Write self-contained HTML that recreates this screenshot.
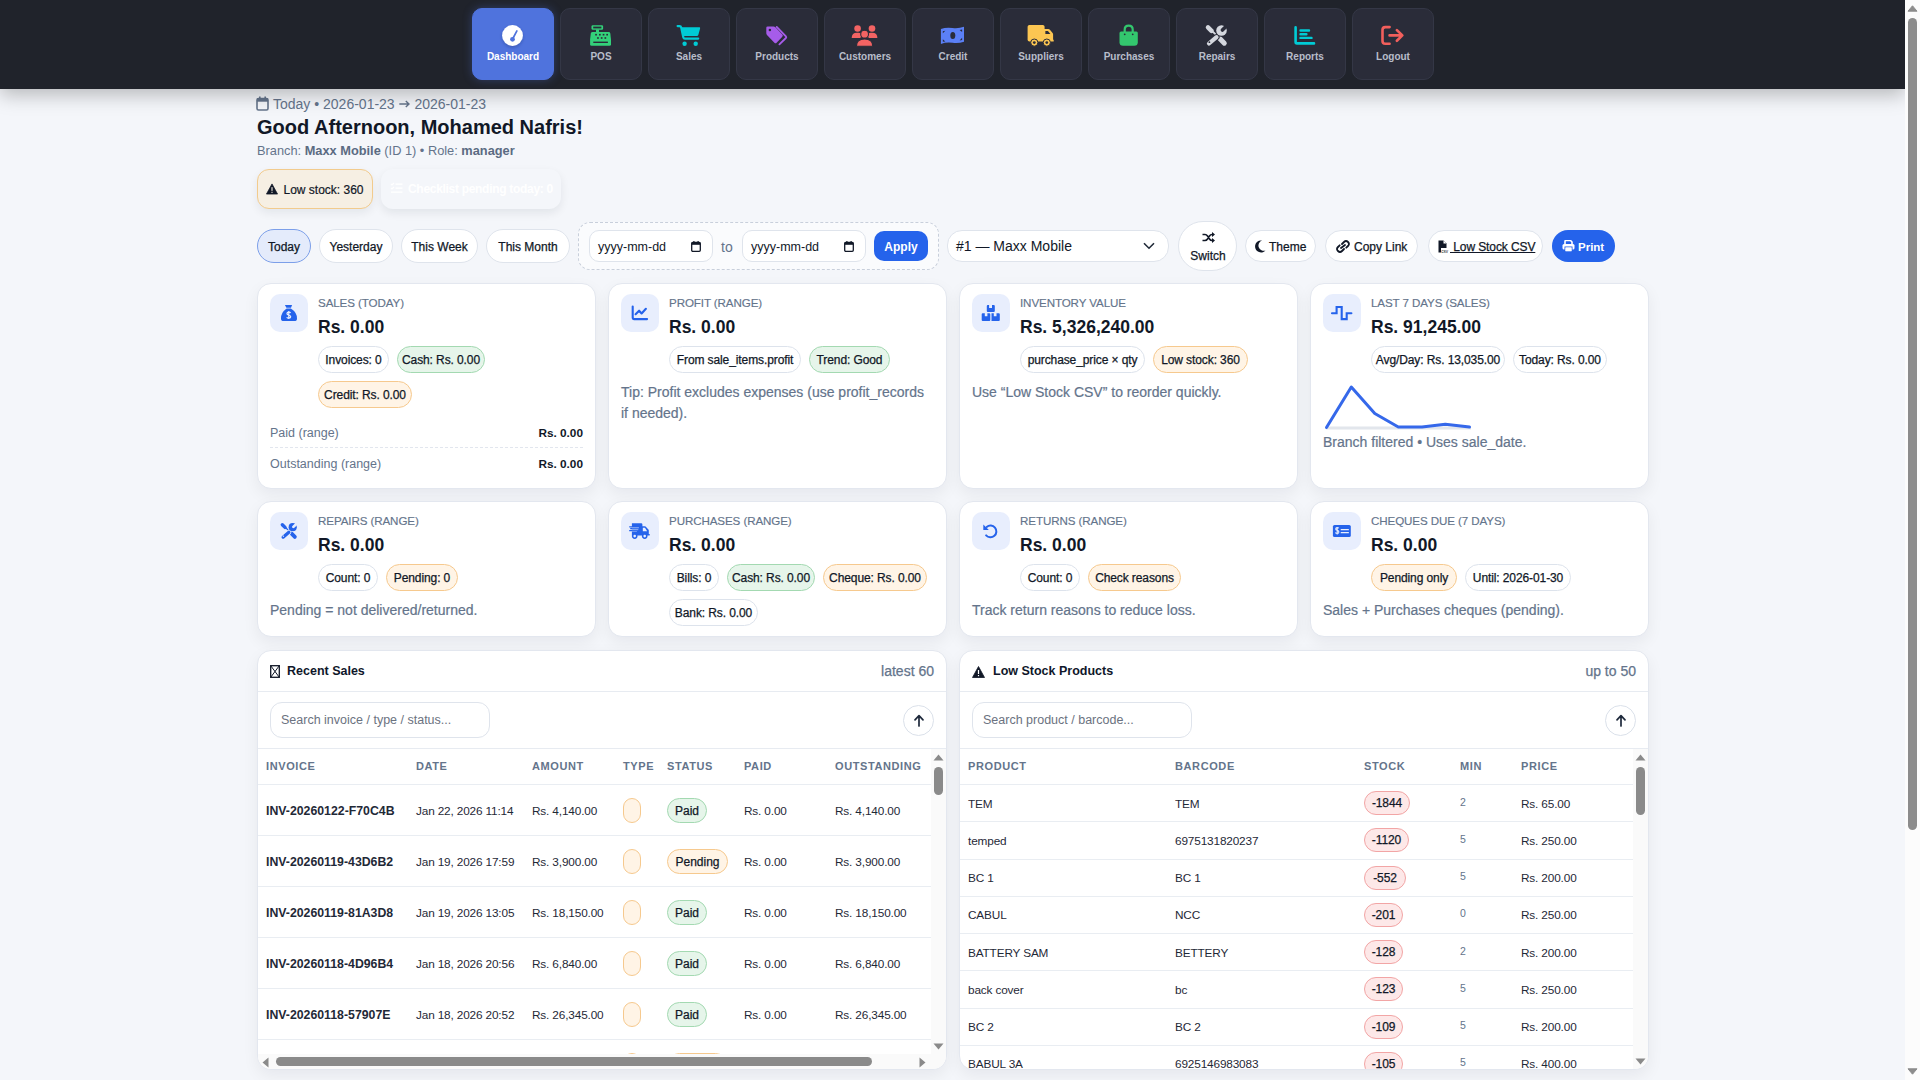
<!DOCTYPE html>
<html><head><meta charset="utf-8">
<style>
*{box-sizing:border-box;margin:0;padding:0}
html,body{width:1920px;height:1080px;overflow:hidden}
body{font-family:"Liberation Sans",sans-serif;background:#f4f6fa;color:#0f172a;position:relative}
.abs{position:absolute}
/* top bar */
.topbar{position:absolute;left:0;top:0;width:1905px;height:89px;background:#20232b;box-shadow:0 6px 18px rgba(0,0,0,.25);z-index:5}
.nav{position:absolute;top:8px;width:82px;height:72px;border-radius:10px;background:#2a2c39;border:1px solid #343746;text-align:center}
.nav svg{position:absolute;left:29px;top:16px;width:24px;height:20px}
.nav span{position:absolute;left:0;right:0;top:41px;font-size:10px;font-weight:700;color:#b8bdca;line-height:14px}
.nav.active{background:#4f73dd;border-color:#4f73dd;box-shadow:0 0 10px rgba(79,115,221,.35)}
.nav.active span{color:#fff}
/* header */
.dateline{left:256px;top:95px;font-size:14px;color:#64748b;line-height:18px;white-space:nowrap}
.dateline svg{position:absolute;left:0;top:1px}
.dateline span{position:absolute;left:17px;top:0}
.hello{left:257px;top:115px;font-size:20px;font-weight:700;color:#111827;line-height:24px;white-space:nowrap}
.branch{left:257px;top:143px;font-size:12.8px;color:#64748b;line-height:16px;white-space:nowrap}
.branch b{color:#5b6b82}
.badge1{left:257px;top:169px;width:116px;height:40px;border-radius:12px;background:#f6efe3;border:1px solid #f2cb8d;box-shadow:0 4px 10px rgba(15,23,42,.07);font-size:12px;color:#111827;white-space:nowrap}
.badge2{left:381px;top:169px;width:180px;height:40px;border-radius:12px;background:#f4f6fa;box-shadow:0 4px 10px rgba(15,23,42,.08);font-size:12px;color:#fff;font-weight:700;white-space:nowrap;letter-spacing:-.3px}
/* toolbar */
.pill{position:absolute;height:34px;border-radius:17px;background:#fff;border:1px solid #dfe4ec;font-size:12px;color:#111827;line-height:34px;text-align:center;white-space:nowrap;-webkit-text-stroke:.25px #111827}
.pill.sel{background:#e4ebfb;border-color:#7c9fe9}
.dashbox{left:578px;top:222px;width:361px;height:48px;border:1px dashed #c8cfdb;border-radius:12px;background:rgba(255,255,255,.55)}
.dinput{position:absolute;top:230px;width:124px;height:32px;border:1px solid #dfe4ec;border-radius:10px;background:#fff;font-size:12.5px;color:#111827;line-height:32px;padding-left:8px}
.dinput svg{position:absolute;right:11px;top:10px}
.btnblue{position:absolute;background:#2563eb;color:#fff;font-weight:700;text-align:center;white-space:nowrap}
.tb{position:absolute;top:230px;height:32px;border-radius:16px;background:#fff;border:1px solid #dfe4ec;font-size:13px;color:#111827;line-height:30px;white-space:nowrap}
.tb span{-webkit-text-stroke:.25px #111827}
/* cards */
.card{position:absolute;background:#fff;border:1px solid #e3e7ef;border-radius:14px;box-shadow:0 6px 16px rgba(15,23,42,.06)}
.ico{position:absolute;left:12px;top:10px;width:38px;height:38px;border-radius:10px;background:#e8eefd}
.ico svg{position:absolute;left:11px;top:11px;width:16px;height:16px;overflow:visible}
.lbl{position:absolute;left:60px;top:10.5px;font-size:11.6px;color:#64748b;line-height:15px;white-space:nowrap;letter-spacing:-.1px;-webkit-text-stroke:.15px #64748b}
.val{position:absolute;left:60px;top:32px;font-size:17.5px;font-weight:700;color:#111827;line-height:22px;white-space:nowrap}
.chips{position:absolute;left:60px;top:62px;right:12px;display:flex;flex-wrap:wrap;gap:8px 8px}
.chip{height:27px;border-radius:14px;border:1px solid #dde3ec;background:#fff;font-size:12px;line-height:26px;padding:0;text-align:center;color:#111827;white-space:nowrap;letter-spacing:-.1px;-webkit-text-stroke:.25px #111827}
.chip.g{background:#e6f5ea;border-color:#a3d9b1}
.chip.o{background:#fff4e6;border-color:#f6c98e}
.chip.r{background:#fde8e8;border-color:#f2a5a5}
.note{position:absolute;left:12px;font-size:14px;color:#64748b;line-height:21px;-webkit-text-stroke:.2px #64748b}
/* panels */
.panel{position:absolute;top:650px;width:690px;height:420px;background:#fff;border:1px solid #e3e7ef;border-radius:14px;box-shadow:0 6px 16px rgba(15,23,42,.06);overflow:hidden}
.ptitle{position:absolute;left:12px;top:12px;font-size:12.5px;font-weight:700;color:#0f172a;line-height:17px;white-space:nowrap}
.pright{position:absolute;right:12px;top:12px;font-size:14px;color:#64748b;line-height:17px;font-weight:400;-webkit-text-stroke:.25px #64748b}
.hr{position:absolute;left:0;right:0;height:1px;background:#e7ebf1}
.search{position:absolute;left:12px;top:51px;width:220px;height:36px;border:1px solid #dfe4ec;border-radius:12px;font-size:12.5px;color:#6b7280;line-height:34px;padding-left:10px}
.upbtn{position:absolute;top:54px;width:31px;height:31px;border-radius:50%;border:1px solid #dbe1ea;background:#fff}
.upbtn svg{position:absolute;left:8px;top:7px}
.th{position:absolute;top:111px;font-size:11px;font-weight:700;color:#64748b;letter-spacing:.6px;line-height:14px;white-space:nowrap}
.td{position:absolute;font-size:11.8px;color:#1f2937;line-height:16px;white-space:nowrap;letter-spacing:-.15px}
.rowline{position:absolute;height:1px;background:#e9edf2}
.sbar{position:absolute;background:#fafafa}
.tri{position:absolute;width:0;height:0}
.thumb{position:absolute;background:#8a8a8a;border-radius:5px}
</style></head><body>

<!-- TOP BAR -->
<div class="topbar">
<svg class="abs" style="left:0;top:0;z-index:2;pointer-events:none" width="1905" height="89" viewBox="0 0 1905 89">
<defs><filter id="ds" x="-50%" y="-50%" width="200%" height="200%"><feDropShadow dx="0" dy="1.5" stdDeviation="1.5" flood-color="#1e2a6b" flood-opacity=".35"/></filter></defs>
<!-- dashboard -->
<circle cx="512.5" cy="35.5" r="10.4" fill="#fff" filter="url(#ds)"/>
<path d="M516.9 30.9 L512.6 39" stroke="#4f73dd" stroke-width="1.7" stroke-linecap="round"/>
<circle cx="512.5" cy="39.3" r="2.4" fill="#4f73dd"/>
<!-- POS -->
<g fill="#33d17a">
<rect x="591.5" y="25.2" width="11.6" height="4.6" rx="1.2"/>
<rect x="596" y="29.5" width="3" height="3"/>
<path d="M592.6 32 H608.6 Q610 32 610.3 33.4 L611 39.5 V44.3 Q611 45.8 609.5 45.8 H591.6 Q590.1 45.8 590.1 44.3 V39.5 L590.8 33.4 Q591.1 32 592.6 32 Z"/>
</g>
<g fill="#2a2c39">
<rect x="593.2" y="26.6" width="8.2" height="1.8"/>
<rect x="595.2" y="33.9" width="1.7" height="1.6"/><rect x="599" y="33.9" width="1.7" height="1.6"/><rect x="602.7" y="33.9" width="1.7" height="1.6"/><rect x="606.3" y="33.9" width="1.7" height="1.6"/>
<rect x="597.1" y="37.2" width="1.7" height="1.6"/><rect x="600.8" y="37.2" width="1.7" height="1.6"/><rect x="604.5" y="37.2" width="1.7" height="1.6"/>
<rect x="593.3" y="41.6" width="14.6" height="1.4"/>
</g>
<!-- Sales cart -->
<path d="M677.6 26.1 H679.5 Q680.9 26.1 681.2 27.5 L683.3 37.2 Q683.6 38.6 685 38.6 H698.2" fill="none" stroke="#00ccd6" stroke-width="2.2" stroke-linecap="round" stroke-linejoin="round"/>
<path d="M681 27.3 H699.3 Q700.4 27.3 700.1 28.4 L698.3 35 Q698 36.1 696.9 36.1 H683 Z" fill="#00ccd6"/>
<circle cx="684.6" cy="43.7" r="2.2" fill="#00ccd6"/><circle cx="695.7" cy="43.7" r="2.2" fill="#00ccd6"/>
<!-- Products tags -->
<path d="M767.6 26.5 H773.5 Q774.6 26.5 775.4 27.3 L782.3 34.5 Q783.3 35.6 782.3 36.7 L776.6 42.7 Q775.5 43.8 774.4 42.7 L767.2 35.3 Q766.3 34.4 766.3 33.3 V27.7 Q766.3 26.5 767.6 26.5 Z" fill="#a65ce9"/>
<circle cx="769.9" cy="30" r="1.25" fill="#2a2c39"/>
<path d="M776.7 26.9 L785.9 36.3 Q786.7 37.2 785.9 38 L779.4 44.3" fill="none" stroke="#a65ce9" stroke-width="1.8" stroke-linecap="round"/>
<!-- Customers -->
<g fill="#f36363">
<circle cx="857.6" cy="28.5" r="3.3"/><circle cx="872" cy="28.5" r="3.3"/>
<path d="M851.7 38 Q851.7 32.8 857 32.8 H858.6 Q861 32.8 862 34.5 L860.3 38 Z"/>
<path d="M877.4 38 Q877.4 32.8 872.1 32.8 H870.5 Q868.1 32.8 867.1 34.5 L868.8 38 Z"/>
<circle cx="864.6" cy="34.2" r="3.9" stroke="#2a2c39" stroke-width="1.1"/>
<path d="M856.4 46.2 Q856.4 39 864.6 39 Q872.8 39 872.8 46.2 Z" stroke="#2a2c39" stroke-width="1.1"/>
</g>
<!-- Credit bill -->
<path d="M940.9 28.9 Q946 27.2 952.5 28 Q958.5 28.8 964 26.8 V41.8 Q958.5 43.6 952.5 42.8 Q946 42 940.9 44 Z" fill="#5b80f6"/>
<ellipse cx="952.8" cy="35.5" rx="2.5" ry="3.6" fill="#2a2c39"/>
<g fill="#2a2c39"><path d="M942.8 31.3 L945.3 30.7 L942.8 33.2 Z"/><path d="M962.1 29.5 L959.6 30 L962.1 32 Z"/><path d="M942.8 41.8 L945.3 41.6 L942.8 39.3 Z"/><path d="M962.1 40 L959.6 40.4 L962.1 37.8 Z"/></g>
<!-- Suppliers truck -->
<g fill="#fcc652">
<rect x="1027.6" y="25" width="17" height="16.6" rx="1.8"/>
<path d="M1044 29 H1048.2 Q1049.2 29 1049.9 29.8 L1052.6 33.1 Q1053.1 33.7 1053.1 34.5 V39.8 H1053.7 V41.6 H1044 Z"/>
<circle cx="1034.3" cy="42.6" r="3.6" stroke="#2a2c39" stroke-width="1"/><circle cx="1046.8" cy="42.6" r="3.6" stroke="#2a2c39" stroke-width="1"/>
</g>
<g fill="#2a2c39"><path d="M1045.4 30.9 H1047.9 L1050.4 33.9 H1045.4 Z"/><circle cx="1034.3" cy="42.6" r="1.4"/><circle cx="1046.8" cy="42.6" r="1.4"/></g>
<!-- Purchases bag -->
<path d="M1124.7 33 V29.6 Q1124.7 25.6 1128.7 25.6 Q1132.7 25.6 1132.7 29.6 V33" fill="none" stroke="#33c76e" stroke-width="2.2"/>
<path d="M1121 31.5 H1136.3 Q1137.8 31.5 1137.8 33 V42.3 Q1137.8 45.8 1134.3 45.8 H1123 Q1119.5 45.8 1119.5 42.3 V33 Q1119.5 31.5 1121 31.5 Z" fill="#33c76e"/>
<circle cx="1124.7" cy="34.3" r=".9" fill="#2a2c39"/><circle cx="1132.7" cy="34.3" r=".9" fill="#2a2c39"/>
<!-- Repairs -->
<g transform="translate(1205.6 24.8)"><line x1="2.4" y1="2.5" x2="5.9" y2="6" stroke="#d4d7de" stroke-width="4.5" stroke-linecap="round"/><line x1="6.4" y1="6.2" x2="12.4" y2="11.7" stroke="#d4d7de" stroke-width="1.7"/><line x1="13.9" y1="13.5" x2="18.7" y2="18.4" stroke="#d4d7de" stroke-width="5" stroke-linecap="round"/><circle cx="15.9" cy="5.7" r="6.3" fill="#2a2c39"/><line x1="10.9" y1="12.4" x2="3.4" y2="18.7" stroke="#2a2c39" stroke-width="6.2" stroke-linecap="round"/><line x1="10.9" y1="12.4" x2="3.4" y2="18.7" stroke="#d4d7de" stroke-width="4.2" stroke-linecap="round"/><circle cx="15.9" cy="5.7" r="5.3" fill="#d4d7de"/><line x1="16.8" y1="5.3" x2="22.5" y2="-0.4" stroke="#2a2c39" stroke-width="3.6" stroke-linecap="round"/><circle cx="3.8" cy="17.4" r=".9" fill="#2a2c39"/></g>
<!-- Reports -->
<g fill="none" stroke="#00ccd6" stroke-linecap="round">
<path d="M1295.6 27.4 V42 Q1295.6 43.4 1297 43.4 H1314" stroke-width="2.6"/>
<path d="M1300.5 30.5 H1309 M1300.5 34.2 H1306.4 M1300.5 37.9 H1311.5" stroke-width="2.4"/>
</g>
<!-- Logout -->
<g fill="none" stroke="#f25f5c" stroke-linecap="round" stroke-linejoin="round">
<path d="M1389.6 27.1 H1385.3 Q1382.5 27.1 1382.5 29.9 V41 Q1382.5 43.8 1385.3 43.8 H1389.6" stroke-width="2.6"/>
<path d="M1389.6 35.4 H1401.6 M1396.9 30.1 L1402.3 35.4 L1396.9 40.7" stroke-width="2.7"/>
</g>
</svg>

  <div class="nav active" style="left:472px"><span>Dashboard</span></div>
  <div class="nav" style="left:560px"><span>POS</span></div>
  <div class="nav" style="left:648px"><span>Sales</span></div>
  <div class="nav" style="left:736px"><span>Products</span></div>
  <div class="nav" style="left:824px"><span>Customers</span></div>
  <div class="nav" style="left:912px"><span>Credit</span></div>
  <div class="nav" style="left:1000px"><span>Suppliers</span></div>
  <div class="nav" style="left:1088px"><span>Purchases</span></div>
  <div class="nav" style="left:1176px"><span>Repairs</span></div>
  <div class="nav" style="left:1264px"><span>Reports</span></div>
  <div class="nav" style="left:1352px"><span>Logout</span></div>
</div>

<!-- HEADER -->
<div class="abs dateline"><svg width="13" height="15" viewBox="0 0 13 15"><rect x="1" y="2.5" width="11" height="11.5" rx="1.5" fill="none" stroke="#64748b" stroke-width="1.6"/><rect x="1" y="2.5" width="11" height="3.2" fill="#64748b"/><rect x="3" y="0.5" width="1.6" height="3" fill="#64748b"/><rect x="8.4" y="0.5" width="1.6" height="3" fill="#64748b"/></svg><span>Today • 2026-01-23 <svg width="11" height="8" viewBox="0 0 11 8" style="position:static;vertical-align:1px;margin:0 .5px"><path d="M0.3 4 H10 M6.8 0.9 L10 4 L6.8 7.1" stroke="#64748b" stroke-width="1.4" fill="none"/></svg> 2026-01-23</span></div>
<div class="abs hello">Good Afternoon, Mohamed Nafris!</div>
<div class="abs branch">Branch: <b>Maxx Mobile</b> (ID 1) • Role: <b>manager</b></div>
<div class="abs badge1"><svg class="abs" style="left:8px;top:13px" width="12" height="12" viewBox="0 0 13 12"><path d="M6.5 0.5 L12.5 11.5 H0.5 Z" fill="#111827" stroke="#111827" stroke-width="0.8" stroke-linejoin="round"/><rect x="5.9" y="4" width="1.2" height="4" fill="#f6efe3"/><rect x="5.9" y="9" width="1.2" height="1.2" fill="#f6efe3"/></svg><span class="abs" style="left:25.5px;top:12px;line-height:16px;-webkit-text-stroke:.2px #111827">Low stock: 360</span></div>
<div class="abs badge2"><svg class="abs" style="left:9px;top:13px" width="13" height="12" viewBox="0 0 13 12"><path d="M1 2 L2 3 L4 1 M1 6 L2 7 L4 5" stroke="#fff" stroke-width="1.2" fill="none"/><rect x="5.5" y="1.5" width="7" height="1.3" fill="#fff"/><rect x="5.5" y="5.5" width="7" height="1.3" fill="#fff"/><rect x="1" y="9.5" width="11.5" height="1.3" fill="#fff"/></svg><span class="abs" style="left:27px;top:12px;line-height:16px">Checklist pending today: 0</span></div>

<!-- TOOLBAR -->
<div class="pill sel" style="left:257px;top:229px;width:54px">Today</div>
<div class="pill" style="left:319px;top:229px;width:74px">Yesterday</div>
<div class="pill" style="left:401px;top:229px;width:77px">This Week</div>
<div class="pill" style="left:486px;top:229px;width:84px">This Month</div>
<div class="abs dashbox"></div>
<div class="dinput" style="left:589px">yyyy-mm-dd<svg width="10" height="11" viewBox="0 0 10 11"><rect x="0.7" y="1.5" width="8.6" height="8.8" rx="1.1" fill="none" stroke="#111827" stroke-width="1.3"/><rect x="0.7" y="1.5" width="8.6" height="2.3" fill="#111827"/><rect x="2.3" y="0" width="1.2" height="2.2" fill="#111827"/><rect x="6.5" y="0" width="1.2" height="2.2" fill="#111827"/></svg></div>
<div class="abs" style="left:721px;top:239px;font-size:14px;color:#64748b;line-height:16px">to</div>
<div class="dinput" style="left:742px">yyyy-mm-dd<svg width="10" height="11" viewBox="0 0 10 11"><rect x="0.7" y="1.5" width="8.6" height="8.8" rx="1.1" fill="none" stroke="#111827" stroke-width="1.3"/><rect x="0.7" y="1.5" width="8.6" height="2.3" fill="#111827"/><rect x="2.3" y="0" width="1.2" height="2.2" fill="#111827"/><rect x="6.5" y="0" width="1.2" height="2.2" fill="#111827"/></svg></div>
<div class="btnblue" style="left:874px;top:231px;width:54px;height:30px;border-radius:10px;font-size:12px;line-height:32px">Apply</div>

<div class="tb" style="left:947px;width:222px;border-radius:15px;font-size:14px;padding-left:8px;line-height:31px">#1 — Maxx Mobile<svg class="abs" style="left:195px;top:11px" width="12" height="8" viewBox="0 0 12 8"><path d="M1 1.2 L6 6.2 L11 1.2" fill="none" stroke="#1f2937" stroke-width="1.6"/></svg></div>
<div class="tb" style="left:1178px;top:221px;width:59px;height:50px;border-radius:25px;text-align:center;line-height:14px;font-size:12px"><svg class="abs" style="left:22.5px;top:10px" width="13" height="11" viewBox="0 0 13 11"><path d="M0.5 2.5 H3 Q4.5 2.5 5.5 4 L7.5 7 Q8.5 8.5 10 8.5 H11 M0.5 8.5 H3 Q4.5 8.5 5.5 7 L7.5 4 Q8.5 2.5 10 2.5 H11" fill="none" stroke="#111827" stroke-width="1.6"/><path d="M10 0 L13 2.5 L10 5 Z M10 6 L13 8.5 L10 11 Z" fill="#111827"/></svg><span class="abs" style="left:1px;right:0;top:27px">Switch</span></div>
<div class="tb" style="left:1245px;width:71px;font-size:12px"><svg class="abs" style="left:8px;top:9px" width="12" height="13" viewBox="0 0 12 13"><path d="M8 0.5 A6 6 0 1 0 11.5 10.5 A5 5 0 0 1 8 0.5 Z" fill="#111827"/></svg><span class="abs" style="left:23px;top:1px">Theme</span></div>
<div class="tb" style="left:1325px;width:93px;font-size:12px"><svg class="abs" style="left:10px;top:9px" width="14" height="13" viewBox="0 0 14 13"><path d="M6 4 L8 2 Q10 0 12 2 Q14 4 12 6 L10.3 7.7 M8 9 L6 11 Q4 13 2 11 Q0 9 2 7 L3.7 5.3 M5 8 L9 5" fill="none" stroke="#111827" stroke-width="1.8" stroke-linecap="round"/></svg><span class="abs" style="left:28px;top:1px">Copy Link</span></div>
<div class="tb" style="left:1428px;width:115px;font-size:12px"><svg class="abs" style="left:9px;top:9px" width="13" height="13" viewBox="0 0 13 13"><path d="M0.5 0.5 H5.5 L8.5 3.5 V12.5 H0.5 Z" fill="#111827"/><path d="M5.5 0.5 V3.5 H8.5 Z" fill="#fff"/><rect x="3" y="8" width="10" height="5" fill="#fff"/><text x="3.2" y="12.6" font-size="4.6" font-family="Liberation Sans" fill="#111827">csv</text></svg><span class="abs" style="left:21px;top:1px;text-decoration:underline;letter-spacing:-.1px">&nbsp;Low Stock CSV</span></div>
<div class="btnblue" style="left:1552px;top:230px;width:63px;height:32px;border-radius:16px;font-size:11.5px;line-height:32px"><svg class="abs" style="left:10px;top:10px" width="13" height="12" viewBox="0 0 13 12"><path d="M3 4 V1.5 Q3 0.5 4 0.5 H8.5 L10 2 V4" fill="none" stroke="#fff" stroke-width="1.6"/><rect x="0.5" y="4" width="12" height="5.5" rx="1.5" fill="#fff"/><rect x="3" y="7" width="7" height="4.5" fill="#fff" stroke="#2563eb" stroke-width="1"/><rect x="3.5" y="7.5" width="6" height="3.8" fill="#fff"/></svg><span class="abs" style="left:26px;top:1px">Print</span></div>

<!-- CARDS ROW 1 -->
<div class="card" style="left:257px;top:283px;width:339px;height:206px">
  <div class="ico"><svg viewBox="0 0 16 16"><path d="M3.9 0 H11.1 L10 2.8 H5.4 Z" fill="#2563eb"/><path d="M5.6 3.6 H9.9 Q16 7.6 16 13.4 Q16 16 13.4 16 H2.6 Q0 16 0 13.4 Q0 7.6 5.6 3.6 Z" fill="#2563eb"/><path d="M9.6 7.9 Q9 7 7.7 7 Q6 7 6 8.4 Q6 9.6 7.8 10 Q9.7 10.5 9.7 11.8 Q9.7 13.2 7.8 13.2 Q6.3 13.2 5.7 12.2 M7.8 6 V14" fill="none" stroke="#e8eefd" stroke-width="1.25"/></svg></div>
  <div class="lbl">SALES (TODAY)</div>
  <div class="val">Rs. 0.00</div>
  <div class="chips"><div class="chip" style="width:71px">Invoices: 0</div><div class="chip g" style="width:88px">Cash: Rs. 0.00</div><div class="chip o" style="width:94px">Credit: Rs. 0.00</div></div>
  <div class="abs" style="left:12px;top:140.5px;font-size:12.5px;color:#64748b;line-height:16px">Paid (range)</div>
  <div class="abs" style="right:12px;top:140.5px;font-size:11.8px;font-weight:700;color:#111827;line-height:16px">Rs. 0.00</div>
  <div class="abs" style="left:12px;right:12px;top:163px;border-top:1px dashed #e2e6ee"></div>
  <div class="abs" style="left:12px;top:171.5px;font-size:12.5px;color:#64748b;line-height:16px">Outstanding (range)</div>
  <div class="abs" style="right:12px;top:171.5px;font-size:11.8px;font-weight:700;color:#111827;line-height:16px">Rs. 0.00</div>
</div>
<div class="card" style="left:608px;top:283px;width:339px;height:206px">
  <div class="ico"><svg viewBox="0 0 16 16"><path d="M0.7 1.6 V12.6 Q0.7 14.1 2.2 14.1 H15.1" fill="none" stroke="#2563eb" stroke-width="2.1" stroke-linecap="round"/><path d="M3.6 9.2 L7.1 5.7 L9.6 8.5 L13.9 3.8" fill="none" stroke="#2563eb" stroke-width="2.1" stroke-linecap="round" stroke-linejoin="round"/></svg></div>
  <div class="lbl">PROFIT (RANGE)</div>
  <div class="val">Rs. 0.00</div>
  <div class="chips"><div class="chip" style="width:132px">From sale_items.profit</div><div class="chip g" style="width:81px">Trend: Good</div></div>
  <div class="note" style="top:98px;width:310px">Tip: Profit excludes expenses (use profit_records if needed).</div>
</div>
<div class="card" style="left:959px;top:283px;width:339px;height:206px">
  <div class="ico"><svg viewBox="0 0 16 16"><path d="M4.8 0.1 H6.1 V3 H9 V0.1 H10.8 Q11.8 0.1 11.8 1.1 V6.1 Q11.8 7.1 10.8 7.1 H4.8 Q3.8 7.1 3.8 6.1 V1.1 Q3.8 0.1 4.8 0.1 Z" fill="#2563eb"/><path d="M-0.3 8.3 H1.8 V11.2 H4.4 V8.3 H6.3 Q7.3 8.3 7.3 9.3 V15 Q7.3 16 6.3 16 H-0.3 Q-1.3 16 -1.3 15 V9.3 Q-1.3 8.3 -0.3 8.3 Z" fill="#2563eb"/><path d="M8.5 8.3 H10.8 V11.2 H13.5 V8.3 H15.8 Q16.8 8.3 16.8 9.3 V15 Q16.8 16 15.8 16 H8.5 Z" fill="#2563eb"/></svg></div>
  <div class="lbl">INVENTORY VALUE</div>
  <div class="val">Rs. 5,326,240.00</div>
  <div class="chips"><div class="chip" style="width:125px">purchase_price × qty</div><div class="chip o" style="width:95px">Low stock: 360</div></div>
  <div class="note" style="top:98px">Use “Low Stock CSV” to reorder quickly.</div>
</div>
<div class="card" style="left:1310px;top:283px;width:339px;height:206px">
  <div class="ico"><svg viewBox="0 0 16 16"><path d="M-2 8.3 H2.6 V2 H7.7 V14.1 H12.7 V8.3 H17.4" fill="none" stroke="#2563eb" stroke-width="2.1" stroke-linejoin="miter" stroke-linecap="round"/></svg></div>
  <div class="lbl">LAST 7 DAYS (SALES)</div>
  <div class="val">Rs. 91,245.00</div>
  <div class="chips"><div class="chip" style="width:134px">Avg/Day: Rs. 13,035.00</div><div class="chip" style="width:94px">Today: Rs. 0.00</div></div>
  <svg class="abs" style="left:12px;top:98.5px" width="150" height="48" viewBox="0 0 150 48"><line x1="3" y1="45" x2="148" y2="45" stroke="#e2e6ec" stroke-width="3"/><polyline points="3.5,44.5 28.3,4 51.8,30.5 75.3,44 99,44 122.3,41.3 146.5,44" fill="none" stroke="#3568ea" stroke-width="3" stroke-linejoin="round" stroke-linecap="round"/></svg>
  <div class="note" style="top:148px">Branch filtered • Uses sale_date.</div>
</div>

<!-- CARDS ROW 2 -->
<div class="card" style="left:257px;top:501px;width:339px;height:136px">
  <div class="ico"><svg viewBox="0 0 16 16"><g transform="translate(-0.5 -0.2) scale(0.767)"><line x1="2.4" y1="2.5" x2="5.9" y2="6" stroke="#2563eb" stroke-width="4.5" stroke-linecap="round"/><line x1="6.4" y1="6.2" x2="12.4" y2="11.7" stroke="#2563eb" stroke-width="1.7"/><line x1="13.9" y1="13.5" x2="18.7" y2="18.4" stroke="#2563eb" stroke-width="5" stroke-linecap="round"/><circle cx="15.9" cy="5.7" r="6.3" fill="#e8eefd"/><line x1="10.9" y1="12.4" x2="3.4" y2="18.7" stroke="#e8eefd" stroke-width="6.2" stroke-linecap="round"/><line x1="10.9" y1="12.4" x2="3.4" y2="18.7" stroke="#2563eb" stroke-width="4.2" stroke-linecap="round"/><circle cx="15.9" cy="5.7" r="5.3" fill="#2563eb"/><line x1="16.8" y1="5.3" x2="22.5" y2="-0.4" stroke="#e8eefd" stroke-width="3.6" stroke-linecap="round"/><circle cx="3.8" cy="17.4" r=".9" fill="#e8eefd"/></g></svg></div>
  <div class="lbl">REPAIRS (RANGE)</div>
  <div class="val">Rs. 0.00</div>
  <div class="chips"><div class="chip" style="width:60px">Count: 0</div><div class="chip o" style="width:72px">Pending: 0</div></div>
  <div class="note" style="top:98px">Pending = not delivered/returned.</div>
</div>
<div class="card" style="left:608px;top:501px;width:339px;height:136px">
  <div class="ico"><svg viewBox="0 0 16 16"><path d="M1.2 0.3 H9.2 Q10.4 0.3 10.4 1.5 V3.2 H12.6 Q13.2 3.2 13.6 3.6 L16.4 6.5 Q16.8 6.9 16.8 7.5 V11 H17.4 Q17.8 11 17.8 11.4 V12.1 Q17.8 12.5 17.4 12.5 H-0.1 V8.4 H4.9 V7.7 H-0.1 V0.3 Z" fill="#2563eb"/><path d="M10.8 4.8 H13 L15.1 8.2 H10.8 Z" fill="#e8eefd"/><g stroke="#2563eb" stroke-width="1.3" stroke-linecap="round"><line x1="-2.3" y1="3.8" x2="6.6" y2="3.8"/><line x1="-1.3" y1="5.7" x2="6" y2="5.7"/><line x1="-2.3" y1="7.7" x2="5" y2="7.7"/></g><g stroke="#e8eefd" stroke-width=".6"><line x1="0" y1="4.75" x2="6.9" y2="4.75"/><line x1="0" y1="6.7" x2="6.3" y2="6.7"/></g><circle cx="2.7" cy="13.1" r="2.8" fill="#2563eb"/><circle cx="2.7" cy="13.1" r="1.3" fill="#e8eefd"/><circle cx="12.7" cy="13.1" r="2.8" fill="#2563eb"/><circle cx="12.7" cy="13.1" r="1.3" fill="#e8eefd"/></svg></div>
  <div class="lbl">PURCHASES (RANGE)</div>
  <div class="val">Rs. 0.00</div>
  <div class="chips"><div class="chip" style="width:50px">Bills: 0</div><div class="chip g" style="width:88px">Cash: Rs. 0.00</div><div class="chip o" style="width:104px">Cheque: Rs. 0.00</div><div class="chip" style="width:89px">Bank: Rs. 0.00</div></div>
</div>
<div class="card" style="left:959px;top:501px;width:339px;height:136px">
  <div class="ico"><svg viewBox="0 0 16 16"><path d="M3.7 3.9 A5.9 5.9 0 1 1 3.1 12.4" fill="none" stroke="#2563eb" stroke-width="2" stroke-linecap="round"/><path d="M0.3 1.6 V7.1 H5.8 Z" fill="#2563eb"/></svg></div>
  <div class="lbl">RETURNS (RANGE)</div>
  <div class="val">Rs. 0.00</div>
  <div class="chips"><div class="chip" style="width:60px">Count: 0</div><div class="chip o" style="width:93px">Check reasons</div></div>
  <div class="note" style="top:98px">Track return reasons to reduce loss.</div>
</div>
<div class="card" style="left:1310px;top:501px;width:339px;height:136px">
  <div class="ico"><svg viewBox="0 0 16 16"><rect x="-1.1" y="2" width="17.9" height="12.1" rx="1.6" fill="#2563eb"/><path d="M4.8 5.3 Q4.4 4.6 3.2 4.6 Q1.7 4.6 1.7 5.9 Q1.7 7 3.2 7.4 Q4.9 7.8 4.9 9.1 Q4.9 10.5 3.2 10.5 Q1.9 10.5 1.4 9.6 M3.2 3.9 V11.5" fill="none" stroke="#e8eefd" stroke-width="1.1"/><path d="M7.2 6.7 H14.4 M7.2 9.7 H14.4" stroke="#e8eefd" stroke-width="1.2" stroke-linecap="round"/></svg></div>
  <div class="lbl">CHEQUES DUE (7 DAYS)</div>
  <div class="val">Rs. 0.00</div>
  <div class="chips"><div class="chip o" style="width:86px">Pending only</div><div class="chip" style="width:106px">Until: 2026-01-30</div></div>
  <div class="note" style="top:98px">Sales + Purchases cheques (pending).</div>
</div>

<!-- PANELS -->
<div class="panel" style="left:257px">
  <svg class="abs" style="left:12px;top:14px" width="10" height="13" viewBox="0 0 10 13"><rect x="0.7" y="0.7" width="8.6" height="11.6" fill="none" stroke="#111827" stroke-width="1.3"/><path d="M0.7 0.7 L9.3 12.3 M9.3 0.7 L0.7 12.3" stroke="#111827" stroke-width="1"/></svg>
  <div class="ptitle" style="left:29px">Recent Sales</div>
  <div class="pright">latest 60</div>
  <div class="hr" style="top:40px"></div>
  <div class="search">Search invoice / type / status...</div>
  <div class="upbtn" style="left:645px"><svg width="14" height="15" viewBox="0 0 14 15"><path d="M7 13 V3 M3 6.8 L7 2.6 L11 6.8" fill="none" stroke="#1e293b" stroke-width="1.7" stroke-linecap="round" stroke-linejoin="round"/></svg></div>
  <div class="hr" style="top:97px"></div>
  <div id="sales"><div class="abs" style="left:0;top:98px;width:673px;height:305px;overflow:hidden">
<div class="th" style="left:8px;top:10px">INVOICE</div>
<div class="th" style="left:158px;top:10px">DATE</div>
<div class="th" style="left:274px;top:10px">AMOUNT</div>
<div class="th" style="left:365px;top:10px">TYPE</div>
<div class="th" style="left:409px;top:10px">STATUS</div>
<div class="th" style="left:486px;top:10px">PAID</div>
<div class="th" style="left:577px;top:10px">OUTSTANDING</div>
<div class="rowline" style="left:0;width:673px;top:35px"></div>
<div class="td" style="left:8px;top:53.5px;font-weight:700;font-size:12.3px;letter-spacing:0">INV-20260122-F70C4B</div>
<div class="td" style="left:158px;top:53.5px">Jan 22, 2026 11:14</div>
<div class="td" style="left:274px;top:53.5px">Rs. 4,140.00</div>
<div class="abs" style="left:365px;top:49.0px;width:18px;height:25px;border-radius:9px;background:#fff4e6;border:1px solid #f6c98e"></div>
<div class="chip g abs" style="left:409px;top:49.0px;width:40px;height:25px;line-height:24px;padding:0;text-align:center;font-size:12px;letter-spacing:0">Paid</div>
<div class="td" style="left:486px;top:53.5px">Rs. 0.00</div>
<div class="td" style="left:577px;top:53.5px">Rs. 4,140.00</div>
<div class="rowline" style="left:0;width:673px;top:86.0px"></div>
<div class="td" style="left:8px;top:104.5px;font-weight:700;font-size:12.3px;letter-spacing:0">INV-20260119-43D6B2</div>
<div class="td" style="left:158px;top:104.5px">Jan 19, 2026 17:59</div>
<div class="td" style="left:274px;top:104.5px">Rs. 3,900.00</div>
<div class="abs" style="left:365px;top:100.0px;width:18px;height:25px;border-radius:9px;background:#fff4e6;border:1px solid #f6c98e"></div>
<div class="chip o abs" style="left:409px;top:100.0px;width:61px;height:25px;line-height:24px;padding:0;text-align:center;font-size:12px;letter-spacing:0">Pending</div>
<div class="td" style="left:486px;top:104.5px">Rs. 0.00</div>
<div class="td" style="left:577px;top:104.5px">Rs. 3,900.00</div>
<div class="rowline" style="left:0;width:673px;top:137.0px"></div>
<div class="td" style="left:8px;top:155.5px;font-weight:700;font-size:12.3px;letter-spacing:0">INV-20260119-81A3D8</div>
<div class="td" style="left:158px;top:155.5px">Jan 19, 2026 13:05</div>
<div class="td" style="left:274px;top:155.5px">Rs. 18,150.00</div>
<div class="abs" style="left:365px;top:151.0px;width:18px;height:25px;border-radius:9px;background:#fff4e6;border:1px solid #f6c98e"></div>
<div class="chip g abs" style="left:409px;top:151.0px;width:40px;height:25px;line-height:24px;padding:0;text-align:center;font-size:12px;letter-spacing:0">Paid</div>
<div class="td" style="left:486px;top:155.5px">Rs. 0.00</div>
<div class="td" style="left:577px;top:155.5px">Rs. 18,150.00</div>
<div class="rowline" style="left:0;width:673px;top:188.0px"></div>
<div class="td" style="left:8px;top:206.5px;font-weight:700;font-size:12.3px;letter-spacing:0">INV-20260118-4D96B4</div>
<div class="td" style="left:158px;top:206.5px">Jan 18, 2026 20:56</div>
<div class="td" style="left:274px;top:206.5px">Rs. 6,840.00</div>
<div class="abs" style="left:365px;top:202.0px;width:18px;height:25px;border-radius:9px;background:#fff4e6;border:1px solid #f6c98e"></div>
<div class="chip g abs" style="left:409px;top:202.0px;width:40px;height:25px;line-height:24px;padding:0;text-align:center;font-size:12px;letter-spacing:0">Paid</div>
<div class="td" style="left:486px;top:206.5px">Rs. 0.00</div>
<div class="td" style="left:577px;top:206.5px">Rs. 6,840.00</div>
<div class="rowline" style="left:0;width:673px;top:239.0px"></div>
<div class="td" style="left:8px;top:257.5px;font-weight:700;font-size:12.3px;letter-spacing:0">INV-20260118-57907E</div>
<div class="td" style="left:158px;top:257.5px">Jan 18, 2026 20:52</div>
<div class="td" style="left:274px;top:257.5px">Rs. 26,345.00</div>
<div class="abs" style="left:365px;top:253.0px;width:18px;height:25px;border-radius:9px;background:#fff4e6;border:1px solid #f6c98e"></div>
<div class="chip g abs" style="left:409px;top:253.0px;width:40px;height:25px;line-height:24px;padding:0;text-align:center;font-size:12px;letter-spacing:0">Paid</div>
<div class="td" style="left:486px;top:257.5px">Rs. 0.00</div>
<div class="td" style="left:577px;top:257.5px">Rs. 26,345.00</div>
<div class="rowline" style="left:0;width:673px;top:290.0px"></div>
<div class="td" style="left:8px;top:308.5px;font-weight:700;font-size:12.3px;letter-spacing:0">INV-20260118-XXXXXX</div>
<div class="td" style="left:158px;top:308.5px">Jan 18, 2026 20:40</div>
<div class="td" style="left:274px;top:308.5px">Rs. 1,000.00</div>
<div class="abs" style="left:365px;top:304.0px;width:18px;height:25px;border-radius:9px;background:#fff4e6;border:1px solid #f6c98e"></div>
<div class="chip o abs" style="left:409px;top:304.0px;width:61px;height:25px;line-height:24px;padding:0;text-align:center;font-size:12px;letter-spacing:0">Pending</div>
<div class="td" style="left:486px;top:308.5px">Rs. 0.00</div>
<div class="td" style="left:577px;top:308.5px">Rs. 1,000.00</div>
<div class="rowline" style="left:0;width:673px;top:341.0px"></div>
</div>
<div class="sbar" style="left:673px;top:98px;width:15px;height:305px"></div>
<svg class="abs" style="left:675px;top:103px" width="11" height="7" viewBox="0 0 11 7"><path d="M5.5 0.5 L10.5 6.5 H0.5 Z" fill="#8a8a8a"/></svg>
<div class="thumb" style="left:676px;top:116px;width:9px;height:28px"></div>
<svg class="abs" style="left:675px;top:392px" width="11" height="7" viewBox="0 0 11 7"><path d="M5.5 6.5 L10.5 0.5 H0.5 Z" fill="#8a8a8a"/></svg>
<div class="sbar" style="left:0;top:403px;width:688px;height:16px"></div>
<svg class="abs" style="left:4px;top:406px" width="7" height="11" viewBox="0 0 7 11"><path d="M0.5 5.5 L6.5 0.5 V10.5 Z" fill="#8a8a8a"/></svg>
<div class="thumb" style="left:18px;top:406px;width:596px;height:9px"></div>
<svg class="abs" style="left:661px;top:406px" width="7" height="11" viewBox="0 0 7 11"><path d="M6.5 5.5 L0.5 0.5 V10.5 Z" fill="#8a8a8a"/></svg></div><!--/sales-->
</div>
<div class="panel" style="left:959px">
  <svg class="abs" style="left:12px;top:15px" width="13" height="12" viewBox="0 0 13 12"><path d="M6.5 0.5 L12.5 11.5 H0.5 Z" fill="#111827" stroke="#111827" stroke-width="0.8" stroke-linejoin="round"/><rect x="5.9" y="4" width="1.2" height="4" fill="#fff"/><rect x="5.9" y="9" width="1.2" height="1.2" fill="#fff"/></svg>
  <div class="ptitle" style="left:33px">Low Stock Products</div>
  <div class="pright">up to 50</div>
  <div class="hr" style="top:40px"></div>
  <div class="search">Search product / barcode...</div>
  <div class="upbtn" style="left:645px"><svg width="14" height="15" viewBox="0 0 14 15"><path d="M7 13 V3 M3 6.8 L7 2.6 L11 6.8" fill="none" stroke="#1e293b" stroke-width="1.7" stroke-linecap="round" stroke-linejoin="round"/></svg></div>
  <div class="hr" style="top:97px"></div>
  <div id="stock"><div class="abs" style="left:0;top:98px;width:673px;height:320px;overflow:hidden">
<div class="th" style="left:8px;top:10px">PRODUCT</div>
<div class="th" style="left:215px;top:10px">BARCODE</div>
<div class="th" style="left:404px;top:10px">STOCK</div>
<div class="th" style="left:500px;top:10px">MIN</div>
<div class="th" style="left:561px;top:10px">PRICE</div>
<div class="rowline" style="left:0;width:673px;top:35px"></div>
<div class="td" style="left:8px;top:46.5px">TEM</div>
<div class="td" style="left:215px;top:46.5px">TEM</div>
<div class="chip r abs" style="left:404px;top:42.0px;width:46px;height:24px;line-height:22px;padding:0;text-align:center;font-size:12px">-1844</div>
<div class="td" style="left:500px;top:44.5px;font-size:10.5px;color:#64748b">2</div>
<div class="td" style="left:561px;top:46.5px">Rs. 65.00</div>
<div class="rowline" style="left:0;width:673px;top:72.3px"></div>
<div class="td" style="left:8px;top:83.8px">temped</div>
<div class="td" style="left:215px;top:83.8px">6975131820237</div>
<div class="chip r abs" style="left:404px;top:79.3px;width:45px;height:24px;line-height:22px;padding:0;text-align:center;font-size:12px">-1120</div>
<div class="td" style="left:500px;top:81.8px;font-size:10.5px;color:#64748b">5</div>
<div class="td" style="left:561px;top:83.8px">Rs. 250.00</div>
<div class="rowline" style="left:0;width:673px;top:109.5px"></div>
<div class="td" style="left:8px;top:121.0px">BC 1</div>
<div class="td" style="left:215px;top:121.0px">BC 1</div>
<div class="chip r abs" style="left:404px;top:116.5px;width:42px;height:24px;line-height:22px;padding:0;text-align:center;font-size:12px">-552</div>
<div class="td" style="left:500px;top:119.0px;font-size:10.5px;color:#64748b">5</div>
<div class="td" style="left:561px;top:121.0px">Rs. 200.00</div>
<div class="rowline" style="left:0;width:673px;top:146.8px"></div>
<div class="td" style="left:8px;top:158.3px">CABUL</div>
<div class="td" style="left:215px;top:158.3px">NCC</div>
<div class="chip r abs" style="left:404px;top:153.8px;width:39px;height:24px;line-height:22px;padding:0;text-align:center;font-size:12px">-201</div>
<div class="td" style="left:500px;top:156.3px;font-size:10.5px;color:#64748b">0</div>
<div class="td" style="left:561px;top:158.3px">Rs. 250.00</div>
<div class="rowline" style="left:0;width:673px;top:184.1px"></div>
<div class="td" style="left:8px;top:195.6px">BATTERY SAM</div>
<div class="td" style="left:215px;top:195.6px">BETTERY</div>
<div class="chip r abs" style="left:404px;top:191.1px;width:39px;height:24px;line-height:22px;padding:0;text-align:center;font-size:12px">-128</div>
<div class="td" style="left:500px;top:193.6px;font-size:10.5px;color:#64748b">2</div>
<div class="td" style="left:561px;top:195.6px">Rs. 200.00</div>
<div class="rowline" style="left:0;width:673px;top:221.4px"></div>
<div class="td" style="left:8px;top:232.9px">back cover</div>
<div class="td" style="left:215px;top:232.9px">bc</div>
<div class="chip r abs" style="left:404px;top:228.4px;width:39px;height:24px;line-height:22px;padding:0;text-align:center;font-size:12px">-123</div>
<div class="td" style="left:500px;top:230.9px;font-size:10.5px;color:#64748b">5</div>
<div class="td" style="left:561px;top:232.9px">Rs. 250.00</div>
<div class="rowline" style="left:0;width:673px;top:258.6px"></div>
<div class="td" style="left:8px;top:270.1px">BC 2</div>
<div class="td" style="left:215px;top:270.1px">BC 2</div>
<div class="chip r abs" style="left:404px;top:265.6px;width:39px;height:24px;line-height:22px;padding:0;text-align:center;font-size:12px">-109</div>
<div class="td" style="left:500px;top:268.1px;font-size:10.5px;color:#64748b">5</div>
<div class="td" style="left:561px;top:270.1px">Rs. 200.00</div>
<div class="rowline" style="left:0;width:673px;top:295.9px"></div>
<div class="td" style="left:8px;top:307.4px">BABUL 3A</div>
<div class="td" style="left:215px;top:307.4px">6925146983083</div>
<div class="chip r abs" style="left:404px;top:302.9px;width:39px;height:24px;line-height:22px;padding:0;text-align:center;font-size:12px">-105</div>
<div class="td" style="left:500px;top:305.4px;font-size:10.5px;color:#64748b">5</div>
<div class="td" style="left:561px;top:307.4px">Rs. 400.00</div>
<div class="rowline" style="left:0;width:673px;top:333.2px"></div>
</div>
<div class="sbar" style="left:673px;top:98px;width:15px;height:320px"></div>
<svg class="abs" style="left:675px;top:103px" width="11" height="7" viewBox="0 0 11 7"><path d="M5.5 0.5 L10.5 6.5 H0.5 Z" fill="#8a8a8a"/></svg>
<div class="thumb" style="left:676px;top:116px;width:9px;height:48px"></div>
<svg class="abs" style="left:675px;top:407px" width="11" height="7" viewBox="0 0 11 7"><path d="M5.5 6.5 L10.5 0.5 H0.5 Z" fill="#8a8a8a"/></svg></div><!--/stock-->
</div>

<!-- PAGE SCROLLBAR -->
<div class="abs" style="left:1905px;top:0;width:15px;height:1080px;background:#fcfcfc;z-index:10"></div>
<div class="abs" style="left:1908px;top:18px;width:9px;height:812px;border-radius:5px;background:#8c8c8c;z-index:11"></div>
<svg class="abs" style="left:1907px;top:5px;z-index:11" width="11" height="7" viewBox="0 0 11 7"><path d="M5.5 0.8 L10 6.2 H1 Z" fill="#8c8c8c" stroke="#8c8c8c" stroke-width="1" stroke-linejoin="round"/></svg>
<svg class="abs" style="left:1907px;top:1068px;z-index:11" width="11" height="7" viewBox="0 0 11 7"><path d="M5.5 6.2 L10 0.8 H1 Z" fill="#8c8c8c" stroke="#8c8c8c" stroke-width="1" stroke-linejoin="round"/></svg>
</body></html>
